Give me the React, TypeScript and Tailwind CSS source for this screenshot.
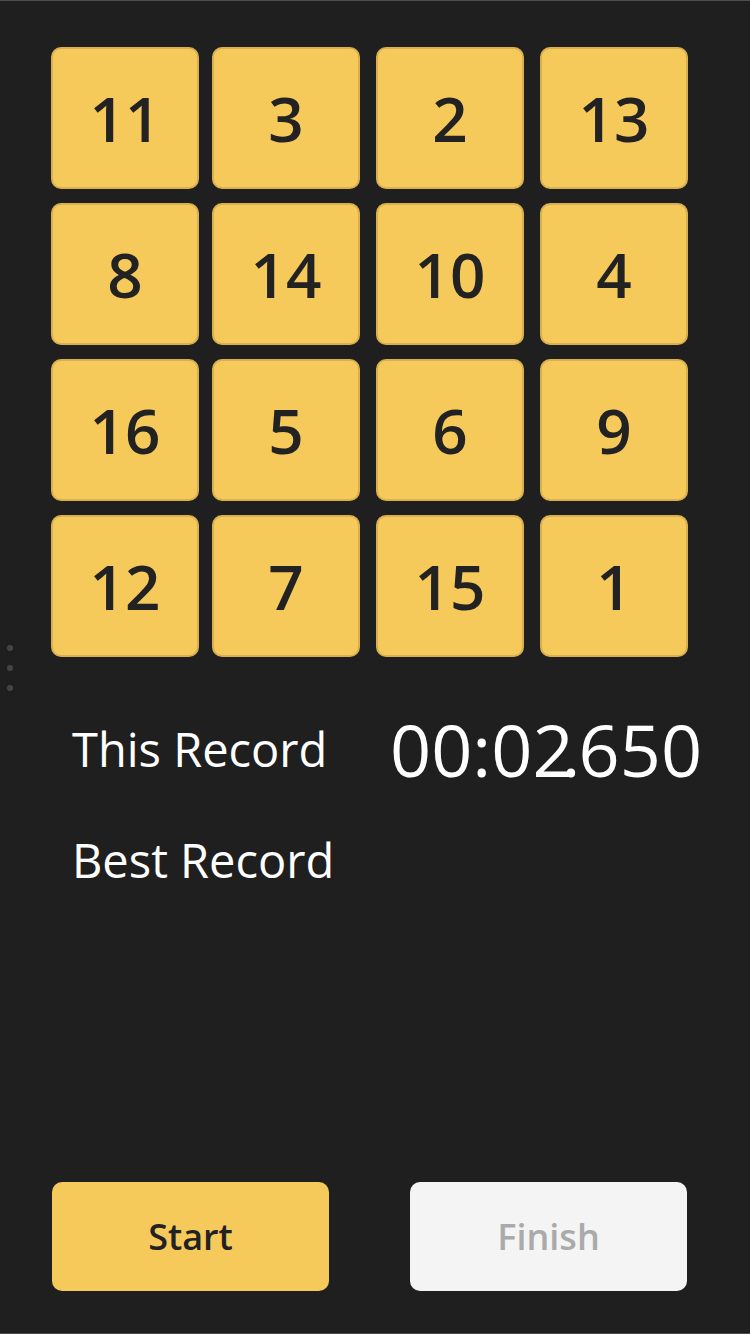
import React from "react";

const rows = [
  [11, 3, 2, 13],
  [8, 14, 10, 4],
  [16, 5, 6, 9],
  [12, 7, 15, 1],
];

export default function App() {
  return (
    <div
      className="relative w-[750px] h-[1334px] bg-[#1f1f1f] border-t border-b border-[#4d4d4d] overflow-hidden"
      style={{ fontFamily: '"Open Sans", "Noto Sans", sans-serif' }}
    >
      <div className="absolute left-[7px] top-[644px] flex flex-col gap-[14px]">
        <span className="block w-[6px] h-[6px] rounded-full bg-[#444]" />
        <span className="block w-[6px] h-[6px] rounded-full bg-[#444]" />
        <span className="block w-[6px] h-[6px] rounded-full bg-[#444]" />
      </div>

      <div className="pt-[46px] pl-[51px] grid grid-cols-[161px_164px_164px_148px] gap-y-[14px]">
        {rows.flat().map((n) => (
          <div
            key={n}
            className="w-[148px] h-[142px] rounded-[10px] bg-[#f5c95a] border-2 border-[#d9b04f] flex items-center justify-center text-[62px] font-semibold text-[#222] leading-none"
          >
            {n}
          </div>
        ))}
      </div>

      <div className="mt-[52px] pl-[72px] flex items-center h-[80px]">
        <div className="w-[318px] text-white text-[47px] leading-none">This Record</div>
        <div className="text-white text-[72px] font-normal leading-none whitespace-nowrap">
          00:02<span className="inline-block w-[2px] -ml-[12px] mr-[15px]">.</span>650
        </div>
      </div>

      <div className="mt-[48px] pl-[72px] text-white text-[47px] leading-none">Best Record</div>

      <div className="absolute left-[52px] right-[63px] top-[1181px] flex justify-between">
        <button className="w-[277px] h-[109px] rounded-[10px] bg-[#f5c95a] text-[#222] text-[36px] font-semibold">
          Start
        </button>
        <button className="w-[277px] h-[109px] rounded-[10px] bg-[#f4f4f4] text-[#aaaaaa] text-[36px] font-semibold">
          Finish
        </button>
      </div>
    </div>
  );
}
